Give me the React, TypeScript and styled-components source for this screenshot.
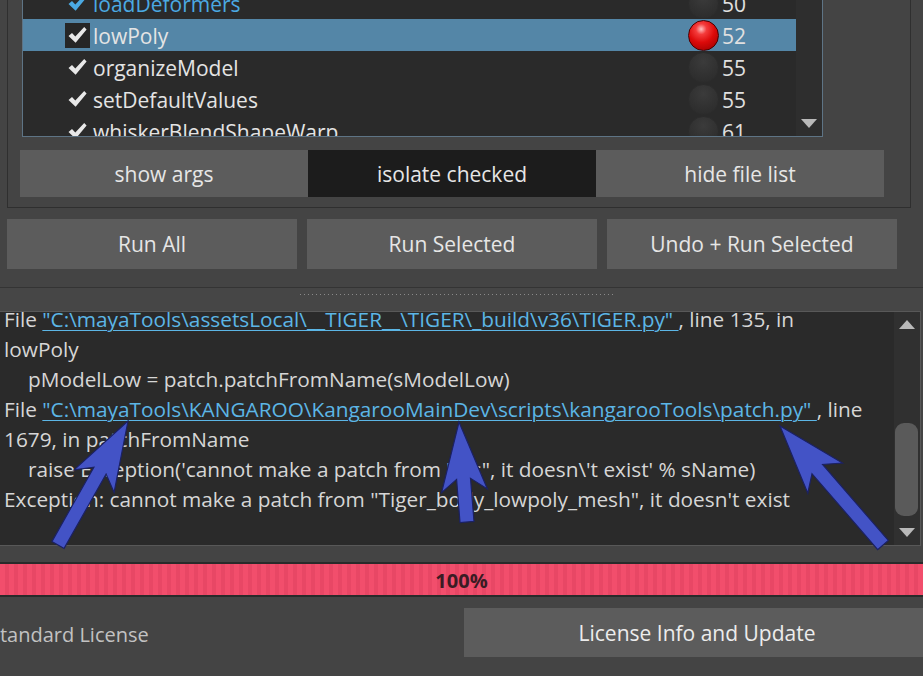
import React from "react";
import styled, { createGlobalStyle } from "styled-components";

const GlobalStyle = createGlobalStyle`
  html, body {
    margin: 0;
    padding: 0;
    background: #444444;
  }
  body {
    font-family: "Open Sans", "Noto Sans", sans-serif;
  }
`;

const Window = styled.div`
  position: relative;
  width: 923px;
  height: 676px;
  overflow: hidden;
  background: #444444;
  color: #dcdcdc;
  display: flex;
  flex-direction: column;
`;

/* ---------- file list group ---------- */

const GroupBox = styled.div`
  margin: -10px 0 0 7px;
  width: 888px;
  border: 1px solid #2f2f2f;
  border-top: none;
  padding: 0 0 10px 14px;
`;

const FileList = styled.div`
  width: 799px;
  height: 145px;
  border: 1px solid #5e7485;
  background: #2a2a2a;
  display: flex;
  overflow: hidden;
`;

const Rows = styled.div`
  flex: 1;
  margin-top: -4px;
`;

const Row = styled.div<{ $selected?: boolean }>`
  height: 32px;
  display: flex;
  align-items: center;
  padding-left: 42px;
  background: ${(p) => (p.$selected ? "#5486a7" : "transparent")};
`;

const CheckBox = styled.div<{ $selected?: boolean }>`
  width: 25px;
  height: 25px;
  display: flex;
  align-items: center;
  justify-content: center;
  background: ${(p) => (p.$selected ? "#262626" : "transparent")};
`;

const RowName = styled.div<{ $active?: boolean }>`
  flex: 1;
  margin-left: 3px;
  padding-top: 1px;
  font-size: 21px;
  color: ${(p) => (p.$active ? "#4ba9e2" : "#e4e4e4")};
  white-space: nowrap;
`;

const Ball = styled.div<{ $on?: boolean }>`
  width: 31px;
  height: 31px;
  border-radius: 50%;
  box-sizing: border-box;
  background: ${(p) =>
    p.$on
      ? "radial-gradient(circle at 42% 28%, #ffc0c0 0, #f43c3c 20%, #dc0a0a 50%, #a00000 90%)"
      : "radial-gradient(circle at 50% 30%, #3b3b3b 0, #313131 55%, #2a2a2a 100%)"};
  border: 1px solid ${(p) => (p.$on ? "#4a0000" : "#2c2c2c")};
`;

const RowNumber = styled.div`
  width: 74px;
  margin-left: 3px;
  padding-top: 1px;
  font-size: 21px;
  color: #e0e0e0;
`;

const ListScroll = styled.div`
  width: 26px;
  background: #2e2e2e;
  display: flex;
  flex-direction: column;
  justify-content: flex-end;
  align-items: center;
  padding-bottom: 8px;
`;

const TriangleDown = styled.div`
  width: 0;
  height: 0;
  border-left: 8px solid transparent;
  border-right: 8px solid transparent;
  border-top: 9px solid #b9b9b9;
`;

const TriangleUp = styled.div`
  width: 0;
  height: 0;
  border-left: 8px solid transparent;
  border-right: 8px solid transparent;
  border-bottom: 9px solid #b9b9b9;
`;

const ToggleRow = styled.div`
  display: flex;
  margin: 13px 0 0 -2px;
  width: 864px;
`;

const ToggleButton = styled.div<{ $on?: boolean }>`
  flex: 1;
  height: 47px;
  display: flex;
  align-items: center;
  justify-content: center;
  font-size: 21px;
  color: #e6e6e6;
  background: ${(p) => (p.$on ? "#1c1c1c" : "#5c5c5c")};
`;

/* ---------- run buttons ---------- */

const RunRow = styled.div`
  display: flex;
  gap: 10px;
  margin: 11px 0 0 7px;
  width: 890px;
`;

const RunButton = styled.div`
  flex: 1;
  height: 50px;
  display: flex;
  align-items: center;
  justify-content: center;
  font-size: 21px;
  color: #e6e6e6;
  background: #5c5c5c;
`;

const Splitter = styled.div`
  margin-top: 18px;
  height: 24px;
  border-top: 1px solid #343434;
  background: #464646;
  display: flex;
  justify-content: flex-start;
  padding-left: 300px;
  padding-top: 6px;
  box-sizing: border-box;
`;

const SplitterDots = styled.div`
  width: 315px;
  height: 1px;
  background: repeating-linear-gradient(90deg, #8a8a8a 0 1px, transparent 1px 4px);
`;

/* ---------- console ---------- */

const Console = styled.div`
  margin-left: -2px;
  width: 923px;
  height: 235px;
  box-sizing: border-box;
  border: 1px solid #585858;
  background: #2a2a2a;
  display: flex;
`;

const ConsoleText = styled.div`
  flex: 1;
  overflow: hidden;
  padding-left: 5px;
`;

const ConsoleLines = styled.div`
  margin-top: -8px;
`;

const Line = styled.div<{ $indent?: boolean }>`
  height: 30px;
  line-height: 30px;
  font-size: 20.8px;
  color: #d6d6d6;
  white-space: pre;
  padding-left: ${(p) => (p.$indent ? "24px" : "0")};
`;

const Link = styled.span`
  color: #5cb6e6;
  text-decoration: underline;
  text-underline-offset: 3px;
  text-decoration-thickness: 1px;
`;

const ConsoleScroll = styled.div`
  width: 26px;
  background: #303030;
  display: flex;
  flex-direction: column;
  align-items: center;
  padding: 8px 0 8px;
  box-sizing: border-box;
`;

const ScrollTrack = styled.div`
  flex: 1;
  width: 100%;
  display: flex;
  flex-direction: column;
  justify-content: flex-end;
  padding: 0 2px 12px 1px;
  box-sizing: border-box;
`;

const ScrollHandle = styled.div`
  height: 93px;
  border-radius: 9px;
  background: #5a5a5a;
`;

/* ---------- progress + footer ---------- */

const Progress = styled.div`
  margin-top: 16px;
  height: 35px;
  box-sizing: border-box;
  border-top: 2px solid #2a2a2a;
  border-bottom: 2px solid #2a2a2a;
  background: repeating-linear-gradient(90deg, #f24e6c 0 5px, #e84765 5px 9px);
  display: flex;
  align-items: center;
  justify-content: center;
  padding-top: 2px;
  font-size: 20px;
  font-weight: 700;
  color: #3a1c24;
`;

const Footer = styled.div`
  margin-top: 11px;
  display: flex;
  align-items: center;
  height: 49px;
`;

const LicenseLabel = styled.div`
  width: 464px;
  flex-shrink: 0;
  padding-top: 3px;
  font-size: 20px;
  color: #c2c2c2;
  text-indent: -11px;
  white-space: nowrap;
  overflow: hidden;
`;

const LicenseButton = styled.div`
  width: 466px;
  height: 49px;
  flex-shrink: 0;
  display: flex;
  align-items: center;
  justify-content: center;
  font-size: 21px;
  color: #ececec;
  background: #5c5c5c;
`;

/* ---------- annotation arrows ---------- */

const Overlay = styled.svg`
  position: absolute;
  left: 0;
  top: 0;
  pointer-events: none;
`;

type Pt = [number, number];

const arrowPoints = (tip: Pt, tail: Pt, headLen = 69, headHalf = 23, shaftHalf = 7, notch = 12) => {
  const dx = tail[0] - tip[0];
  const dy = tail[1] - tip[1];
  const len = Math.hypot(dx, dy);
  const ux = dx / len;
  const uy = dy / len;
  const px = -uy;
  const py = ux;
  const p = (a: number, b: number) =>
    `${(tip[0] + ux * a + px * b).toFixed(1)},${(tip[1] + uy * a + py * b).toFixed(1)}`;
  return [
    p(0, 0),
    p(headLen, headHalf),
    p(headLen - notch, shaftHalf),
    p(len, shaftHalf),
    p(len, -shaftHalf),
    p(headLen - notch, -shaftHalf),
    p(headLen, -headHalf),
  ].join(" ");
};

const arrows: [Pt, Pt][] = [
  [[128, 421], [58, 545]],
  [[459, 422], [467, 522]],
  [[780, 426], [883, 545]],
];

const Check: React.FC<{ color: string }> = ({ color }) => (
  <svg width="21" height="20" viewBox="0 0 21 20">
    <path d="M1.5 11 L5 8 L8.3 11.6 L17.2 2 L19.6 4.4 L8.6 17.8 Z" fill={color} />
  </svg>
);

const files = [
  { name: "loadDeformers", n: 50, active: true },
  { name: "lowPoly", n: 52, selected: true, on: true },
  { name: "organizeModel", n: 55 },
  { name: "setDefaultValues", n: 55 },
  { name: "whiskerBlendShapeWarp", n: 61 },
];

export default function App() {
  return (
    <Window>
      <GlobalStyle />
      <GroupBox>
        <FileList>
          <Rows>
            {files.map((f) => (
              <Row key={f.name} $selected={f.selected}>
                <CheckBox $selected={f.selected}>
                  <Check color={f.active ? "#4ba9e2" : "#e8e8e8"} />
                </CheckBox>
                <RowName $active={f.active}>{f.name}</RowName>
                <Ball $on={f.on} />
                <RowNumber>{f.n}</RowNumber>
              </Row>
            ))}
          </Rows>
          <ListScroll>
            <TriangleDown />
          </ListScroll>
        </FileList>
        <ToggleRow>
          <ToggleButton>show args</ToggleButton>
          <ToggleButton $on>isolate checked</ToggleButton>
          <ToggleButton>hide file list</ToggleButton>
        </ToggleRow>
      </GroupBox>

      <RunRow>
        <RunButton>Run All</RunButton>
        <RunButton>Run Selected</RunButton>
        <RunButton>Undo + Run Selected</RunButton>
      </RunRow>

      <Splitter>
        <SplitterDots />
      </Splitter>

      <Console>
        <ConsoleText>
          <ConsoleLines>
            <Line>
              File <Link>"C:\mayaTools\assetsLocal\__TIGER__\TIGER\_build\v36\TIGER.py" </Link>, line 135, in
            </Line>
            <Line>lowPoly</Line>
            <Line $indent>pModelLow = patch.patchFromName(sModelLow)</Line>
            <Line>
              File <Link>"C:\mayaTools\KANGAROO\KangarooMainDev\scripts\kangarooTools\patch.py" </Link>, line
            </Line>
            <Line>1679, in patchFromName</Line>
            <Line $indent>raise Exception('cannot make a patch from "%s", it doesn\'t exist' % sName)</Line>
            <Line>Exception: cannot make a patch from "Tiger_body_lowpoly_mesh", it doesn't exist</Line>
          </ConsoleLines>
        </ConsoleText>
        <ConsoleScroll>
          <TriangleUp />
          <ScrollTrack>
            <ScrollHandle />
          </ScrollTrack>
          <TriangleDown />
        </ConsoleScroll>
      </Console>

      <Progress>100%</Progress>

      <Footer>
        <LicenseLabel>Standard License</LicenseLabel>
        <LicenseButton>License Info and Update</LicenseButton>
      </Footer>

      <Overlay width="923" height="676" viewBox="0 0 923 676">
        {arrows.map(([tip, tail], i) => (
          <polygon
            key={i}
            points={arrowPoints(tip, tail)}
            fill="#4353c6"
            stroke="#1b2163"
            strokeWidth="1.2"
            strokeLinejoin="miter"
          />
        ))}
      </Overlay>
    </Window>
  );
}
